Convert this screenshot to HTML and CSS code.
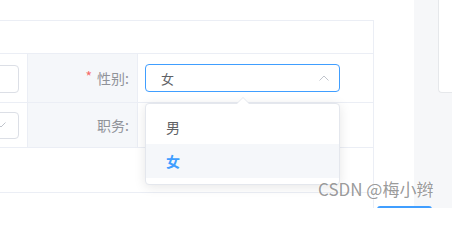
FILE: index.html
```html
<!DOCTYPE html>
<html lang="zh-CN">
<head>
<meta charset="utf-8">
<title>性别选择</title>
<link rel="stylesheet" href="styles.css">
</head>
<body>
<div class="page">
  <div class="main">
    <div class="table">
      <div class="row row-head"></div>
      <div class="row row-a">
        <div class="cell cell-in"><div class="input"></div></div>
        <div class="cell cell-label"><span class="req">*</span>性别:</div>
        <div class="cell cell-value">
          <div class="select is-focus">
            <span class="select-text">女</span>
            <svg class="caret" width="10" height="6" viewBox="0 0 10 6"><polyline points="0.5,5.5 5,1 9.5,5.5" fill="none" stroke="#c0c4cc" stroke-width="1"/></svg>
          </div>
        </div>
      </div>
      <div class="row row-b">
        <div class="cell cell-in">
          <div class="input input-select">
            <svg class="caret" width="10" height="6" viewBox="0 0 10 6"><polyline points="0.5,0.5 5,5 9.5,0.5" fill="none" stroke="#c0c4cc" stroke-width="1"/></svg>
          </div>
        </div>
        <div class="cell cell-label">职务:</div>
        <div class="cell cell-value"></div>
      </div>
      <div class="row row-foot"></div>
      <div class="row row-end"></div>
    </div>
  </div>
  <aside class="side"><div class="card"></div></aside>

  <div class="dropdown">
    <ul class="options">
      <li class="option">男</li>
      <li class="option is-selected">女</li>
    </ul>
  </div>
  <div class="btn"></div>
  <div class="watermark">CSDN @梅小辫</div>
</div>
</body>
</html>
```
FILE: styles.css
```css
* { box-sizing: border-box; }
html, body {
  margin: 0;
  padding: 0;
  width: 452px;
  height: 208px;
  overflow: hidden;
}
body {
  font-family: "Noto Sans CJK SC", "Noto Sans", sans-serif;
  background: #fff;
  color: #606266;
}
.page {
  position: relative;
  width: 452px;
  height: 208px;
  overflow: hidden;
  display: flex;
}
.main {
  width: 414px;
  padding-top: 20px;
  background: #fff;
}
.table {
  width: 374px;
  height: 188px;
  border-top: 1px solid #ebeef5;
  border-right: 1px solid #ebeef5;
  display: flex;
  flex-direction: column;
}
.row {
  display: flex;
  border-bottom: 1px solid #ebeef5;
  flex-shrink: 0;
}
.row-head { height: 33px; }
.row-a { height: 49px; }
.row-b { height: 45px; }
.row-foot { height: 45px; }
.row-end { flex: 1; border-bottom: none; }

.cell { display: flex; align-items: center; }
.cell-in {
  width: 27px;
  padding-right: 8px;
  justify-content: flex-end;
  overflow: hidden;
}
.input {
  flex-shrink: 0;
  width: 100px;
  height: 28px;
  border: 1px solid #dcdfe6;
  border-radius: 4px;
  background: #fff;
  display: flex;
  align-items: center;
  justify-content: flex-end;
  padding-right: 12px;
}
.row-a .input { margin-top: 2px; }
.input-select { height: 27px; }

.cell-label {
  width: 111px;
  border-left: 1px solid #ebeef5;
  border-right: 1px solid #ebeef5;
  background: #f5f7fa;
  justify-content: flex-end;
  padding-right: 8px;
  font-size: 14px;
  color: #909399;
}
.req {
  color: #f56c6c;
  margin-right: 5px;
  font-size: 14px;
  position: relative;
  top: -2px;
}
.cell-value {
  flex: 1;
  padding-left: 7px;
}
.select {
  width: 195px;
  height: 28px;
  border: 1px solid #409eff;
  border-radius: 4px;
  display: flex;
  align-items: center;
  padding-left: 15px;
  padding-right: 10px;
  font-size: 13px;
  color: #606266;
}
.select-text { flex: 1; }
.caret { display: block; flex-shrink: 0; }

.side {
  flex: 1;
  background: #f6f7f9;
  padding-left: 24px;
}
.card {
  height: 93px;
  background: #fff;
  border-left: 1px solid #e6e8eb;
  border-bottom: 1px solid #e6e8eb;
  border-bottom-left-radius: 4px;
}

.dropdown {
  position: absolute;
  left: 145px;
  top: 103px;
  width: 195px;
  background: #fff;
  border: 1px solid #e4e7ed;
  border-radius: 4px;
  box-shadow: 0 2px 12px 0 rgba(0, 0, 0, 0.1);
}
.dropdown::before,
.dropdown::after {
  content: "";
  position: absolute;
  left: 91px;
  width: 0;
  height: 0;
  border-left: 6px solid transparent;
  border-right: 6px solid transparent;
}
.dropdown::before {
  top: -7px;
  border-bottom: 6px solid #e4e7ed;
}
.dropdown::after {
  top: -6px;
  border-bottom: 6px solid #fff;
}
.options {
  list-style: none;
  margin: 0;
  padding: 6px 0;
}
.option {
  height: 34px;
  line-height: 34px;
  padding: 0 20px;
  font-size: 14px;
  color: #606266;
}
.option.is-selected {
  color: #409eff;
  font-weight: 700;
  background: #f5f7fa;
}

.btn {
  position: absolute;
  left: 377px;
  top: 206px;
  width: 55px;
  height: 12px;
  background: #409eff;
  border-radius: 3px;
}
.watermark {
  position: absolute;
  left: 318px;
  top: 177px;
  font-size: 17px;
  line-height: 24px;
  color: rgba(128, 128, 128, 0.8);
  white-space: nowrap;
  text-shadow: 0 0 2px #fff;
}
```
